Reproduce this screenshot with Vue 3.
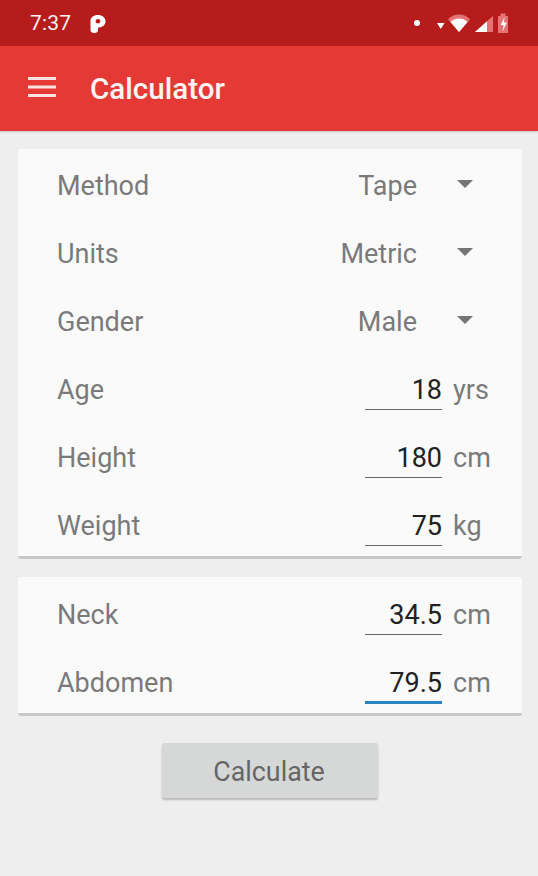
<script setup>
const dropdowns = [
  { label: 'Method', value: 'Tape' },
  { label: 'Units', value: 'Metric' },
  { label: 'Gender', value: 'Male' }
]
const basic = [
  { label: 'Age', value: '18', unit: 'yrs' },
  { label: 'Height', value: '180', unit: 'cm' },
  { label: 'Weight', value: '75', unit: 'kg' }
]
const tape = [
  { label: 'Neck', value: '34.5', unit: 'cm' },
  { label: 'Abdomen', value: '79.5', unit: 'cm', focused: true }
]
</script>

<template>
  <div class="screen">
    <header class="status">
      <span class="time">7:37</span>
      <svg class="p-icon" width="16" height="18" viewBox="0 0 16 18">
        <path fill="#fff" d="M0.500 6C0.500 2.500 3.500 0 7.800 0c4.400 0 7.700 2.600 7.700 6.300 0 3.600-2.900 6.100-6.700 6.100h-.8v2.800c0 1.800-1.300 2.800-3.700 2.800S.5 17 .5 15z" />
        <circle cx="8" cy="6.300" r="2.300" fill="#b71c1c" />
      </svg>
      <span class="spacer"></span>
      <svg class="status-icons" width="110" height="22" viewBox="0 0 110 22">
        <circle cx="17" cy="11" r="3" fill="#fff" />
        <path fill="#fff" d="M37 11h7.500l-3.750 6z" />
        <path fill="#e57373" d="M48 7.500C51 4 54.500 2.500 59 2.500S67 4 70 7.500L59 20z" />
        <path fill="#fff" d="M50.500 10C53 7.600 55.800 6.500 59 6.500s6 1.100 8.500 3.500L59 20z" />
        <path fill="#e57373" d="M75 20 93 4v16z" />
        <path fill="#fff" d="M75 20 87 9.300V20z" />
        <rect x="98" y="4" width="10" height="17" fill="#e57373" />
        <rect x="100.500" y="1.500" width="5" height="3" fill="#e57373" />
        <path fill="#fff" d="M104.500 5l-3.800 8h2.800l-1 6.500 4.300-9h-2.800z" />
      </svg>
    </header>

    <div class="toolbar">
      <svg class="menu" width="28" height="20" viewBox="0 0 28 20">
        <rect y="0" width="28" height="3" fill="#fbe3e3" />
        <rect y="8.500" width="28" height="3" fill="#fbe3e3" />
        <rect y="17" width="28" height="3" fill="#fbe3e3" />
      </svg>
      <h1 class="title">Calculator</h1>
    </div>

    <main class="content">
      <section class="card first">
        <div v-for="row in dropdowns" :key="row.label" class="row">
          <span class="label">{{ row.label }}</span>
          <span class="select-value">{{ row.value }}</span>
          <span class="arrow"></span>
        </div>
        <div v-for="row in basic" :key="row.label" class="row">
          <span class="label">{{ row.label }}</span>
          <span class="field">{{ row.value }}</span>
          <span class="unit">{{ row.unit }}</span>
        </div>
      </section>

      <section class="card second">
        <div v-for="row in tape" :key="row.label" class="row">
          <span class="label">{{ row.label }}</span>
          <span class="field" :class="{ focused: row.focused }">{{ row.value }}</span>
          <span class="unit">{{ row.unit }}</span>
        </div>
      </section>

      <button class="calc" type="button">Calculate</button>
    </main>
  </div>
</template>

<style scoped>
.screen {
  width: 538px;
  height: 876px;
  background: #eeeeee;
  font-family: Roboto, "Liberation Sans", sans-serif;
  overflow: hidden;
}
.status {
  height: 46px;
  background: #b71c1c;
  display: flex;
  align-items: center;
  padding-left: 30px;
  box-sizing: border-box;
  color: #fdf0f0;
}
.time {
  font-size: 21px;
  letter-spacing: 0.2px;
  width: 60px;
}
.p-icon {
  display: block;
  margin-top: 2px;
}
.spacer {
  flex: 1;
}
.status-icons {
  display: block;
  margin-right: 28px;
}
.toolbar {
  height: 85px;
  background: #e53935;
  display: flex;
  align-items: center;
  padding-left: 28px;
  box-sizing: border-box;
  box-shadow: 0 1px 2px rgba(0, 0, 0, 0.2);
}
.menu {
  display: block;
  margin-top: -3px;
}
.title {
  margin: 1px 0 0 34px;
  font-size: 29.6px;
  font-weight: 500;
  color: #fff3f1;
}
.content {
  display: flex;
  flex-direction: column;
  padding: 18px 16px 0 18px;
}
.card {
  background: #fafafa;
  border-radius: 3px;
  border-bottom: 3px solid #c8c8c8;
  box-sizing: border-box;
  padding-left: 39px;
}
.first {
  height: 410px;
  padding-top: 2px;
}
.second {
  height: 139px;
  margin-top: 18px;
  padding-top: 3px;
}
.row {
  height: 68px;
  box-sizing: border-box;
  padding-top: 2px;
  display: flex;
  align-items: center;
  font-size: 27px;
  color: #7a7a7a;
}
.label {
  flex: 1;
}
.select-value {
  margin-right: 40px;
}
.arrow {
  width: 0;
  height: 0;
  border-left: 8px solid transparent;
  border-right: 8px solid transparent;
  border-top: 8px solid #757575;
  margin-right: 49px;
  margin-top: -4px;
}
.field {
  width: 77px;
  box-sizing: border-box;
  align-self: flex-start;
  height: 55px;
  margin: -2px 0 0 1px;
  padding-top: 19px;
  line-height: 32px;
  text-align: right;
  color: #212121;
  border-bottom: 1px solid #666666;
}
.field.focused {
  border-bottom: 3px solid #2b82c4;
  height: 56px;
}
.unit {
  width: 80px;
  box-sizing: border-box;
  padding-left: 11px;
}
.calc {
  align-self: center;
  width: 216px;
  height: 55px;
  margin-top: 27px;
  border: 0;
  border-radius: 2px;
  background: #d6d7d7;
  color: #666666;
  font: 400 26.8px Roboto, "Liberation Sans", sans-serif;
  box-shadow: 0 2px 2px rgba(0, 0, 0, 0.22);
  padding: 2px 2px 0 0;
}
</style>
